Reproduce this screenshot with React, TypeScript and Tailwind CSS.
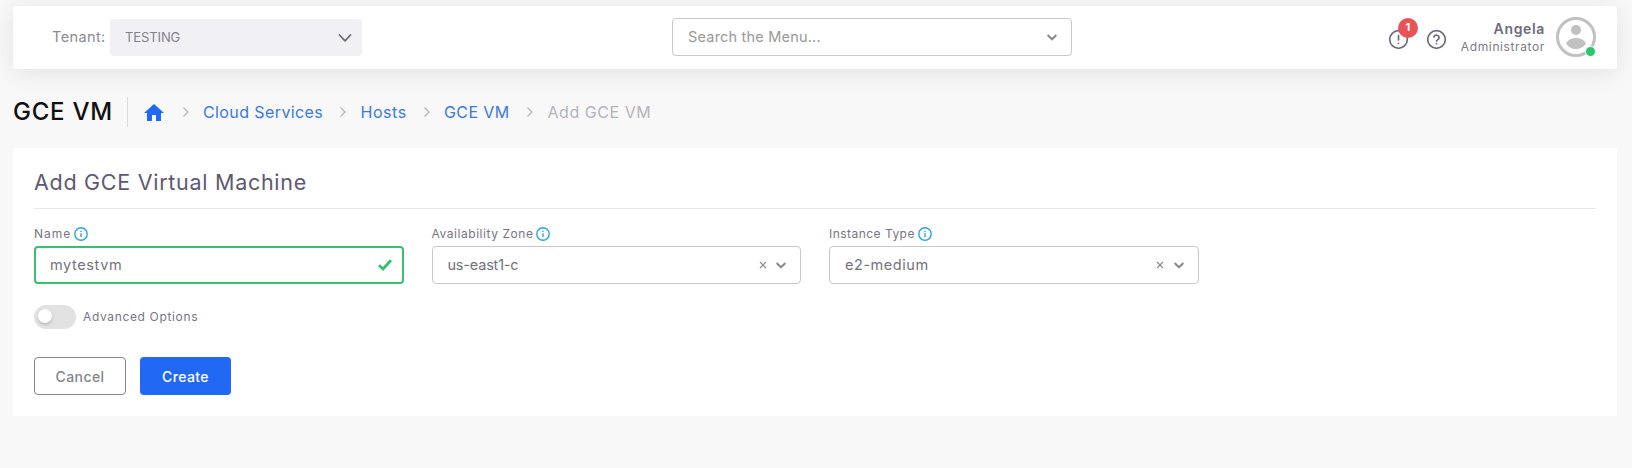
import type { ReactNode } from 'react';

function Chevron({ className = '' }: { className?: string }) {
  return (
    <svg viewBox="0 0 20 20" className={className} fill="currentColor" aria-hidden="true">
      <path d="M4.516 7.548c0.436-0.446 1.043-0.481 1.576 0l3.908 3.747 3.908-3.747c0.533-0.481 1.141-0.446 1.574 0 0.436 0.445 0.408 1.197 0 1.615-0.406 0.418-4.695 4.502-4.695 4.502-0.217 0.223-0.502 0.335-0.787 0.335s-0.57-0.112-0.789-0.335c0 0-4.287-4.084-4.695-4.502s-0.436-1.17 0-1.615z" stroke="currentColor" strokeWidth="0.5" />
    </svg>
  );
}

function Separator() {
  return (
    <svg viewBox="0 0 8 12" className="h-3 w-2 shrink-0" fill="none" stroke="#b8b8bd" strokeWidth="1.4" aria-hidden="true">
      <path d="M1.5 1.5 6 6 1.5 10.5" />
    </svg>
  );
}

function InfoIcon() {
  return (
    <svg viewBox="0 0 14 14" className="size-3.5 shrink-0" fill="none" stroke="#2ba3dc" aria-hidden="true">
      <circle cx="7" cy="7" r="6.2" strokeWidth="1.4" />
      <path d="M7 6.2V10M7 3.8V5" strokeWidth="1.4" />
    </svg>
  );
}

function Field({ label, className, children }: { label: string; className: string; children: ReactNode }) {
  return (
    <div className="flex w-[369.5px] flex-col">
      <div className="flex h-[14px] items-center gap-[3px] text-[12px] font-[375] whitespace-nowrap text-[#77747f]">
        <span className={className}>{label}</span>
        <InfoIcon />
      </div>
      {children}
    </div>
  );
}

function SelectBox({ value, className }: { value: string; className: string }) {
  return (
    <div className="mt-[5px] flex h-[38px] items-center rounded-[4px] border border-[#c8c8c8] pr-[11px] pl-[15px] text-[14.5px] font-[375] text-[#74717c]">
      <span className={className}>{value}</span>
      <svg viewBox="0 0 8 8" className="mr-[6.5px] ml-auto size-2" stroke="#8c8c8c" strokeWidth="1.2" aria-hidden="true">
        <path d="M1 1 7 7M7 1 1 7" />
      </svg>
      <Chevron className="size-4 text-[#888888]" />
    </div>
  );
}

export default function App() {
  return (
    <div className="h-[468px] w-full overflow-hidden bg-[#f8f8f8] pt-1.5 pr-[15px] pl-[13px] font-['Inter',sans-serif]">
      <header className="flex h-[63px] items-center rounded-[3px] bg-white pr-[21px] pl-[39px] shadow-[0_4px_24px_0_rgba(34,41,47,0.1)]">
        <span className="-mt-px w-[58px] text-[14.5px] font-[375] tracking-[0.4px] text-[#8c8a94]">Tenant:</span>
        <div className="flex h-[37px] w-[252px] items-center justify-between rounded-[4px] bg-[#f1f0f5] pr-[10px] pl-[15px] text-[13px] text-[#85828c]">
          <span className="tracking-[-0.1px]">TESTING</span>
          <svg viewBox="0 0 14 10" className="h-[10px] w-[14px]" fill="none" stroke="#6e6b7b" strokeWidth="1.8" strokeLinecap="round" strokeLinejoin="round" aria-hidden="true">
            <path d="M1.5 2 7 7.8 12.5 2" />
          </svg>
        </div>
        <div className="-mt-px ml-[310px] flex h-[38px] w-[400px] items-center justify-between rounded-[4px] border border-[#c8c8c8] pr-[11px] pl-[15px] text-[14.5px] font-[375] text-[#999999]">
          <span className="tracking-[0.2px]">Search the Menu...</span>
          <Chevron className="size-4 text-[#888888]" />
        </div>
        <div className="-mt-px ml-auto flex items-center">
          <div className="relative mt-1 mr-[17px]">
            <svg viewBox="0 0 21 21" className="size-[21px]" fill="none" stroke="#6e6b7b" strokeWidth="1.7" strokeLinecap="round" aria-hidden="true">
              <circle cx="10.5" cy="10.5" r="8.8" />
              <path d="M10.5 6.7v4.2M10.5 14.3v.1" />
            </svg>
            <span className="absolute -top-[11px] left-[10px] flex size-5 items-center justify-center rounded-full bg-[#e85355] text-[11px] font-bold text-white">1</span>
          </div>
          <svg viewBox="0 0 21 21" className="mt-1 mr-[14px] size-[21px]" fill="none" stroke="#6e6b7b" strokeWidth="1.7" strokeLinecap="round" strokeLinejoin="round" aria-hidden="true">
            <circle cx="10.5" cy="10.5" r="8.8" />
            <path d="M7.9 7.9a2.7 2.7 0 0 1 5.2.9c0 1.8-2.6 2.2-2.6 3.2M10.5 14.6v.1" />
          </svg>
          <div className="mt-px flex flex-col items-end text-[#6e6b7b]">
            <span className="text-[14px] leading-[18px] font-semibold tracking-[0.65px]">Angela</span>
            <span className="text-[12px] leading-[17px] font-[375] tracking-[0.62px] text-[#7c7985]">Administrator</span>
          </div>
          <div className="relative ml-[11px] size-10">
            <svg viewBox="0 0 40 40" className="size-10" aria-hidden="true">
              <circle cx="20" cy="20" r="18.5" fill="#fff" stroke="#c1c1c1" strokeWidth="3" />
              <circle cx="20" cy="13" r="5" fill="#c1c1c1" />
              <path d="M10 26.400c2-3.500 5.800-5.300 10-5.300s8 1.800 10 5.300c-2 3.400-5.800 5.500-10 5.500s-8-2.100-10-5.500z" fill="#c1c1c1" />
            </svg>
            <span className="absolute right-0 bottom-0 size-[11px] rounded-full border border-white bg-[#28c76f]" />
          </div>
        </div>
      </header>

      <nav className="flex h-[79px] items-center pt-[7px] whitespace-nowrap text-[16px] text-[#3c78e0]">
        <h1 className="w-[114px] text-[24px] font-medium tracking-[0.75px] text-[#111111]">GCE VM</h1>
        <span className="h-[30px] w-px bg-[#d6dce1]" />
        <svg viewBox="0 0 20 17" className="ml-4 h-[17px] w-5" fill="#2168f5" aria-hidden="true">
          <path d="M8 17v-6h4v6h5V9h3L10 0 0 9h3v8z" />
        </svg>
        <span className="ml-[18px] flex"><Separator /></span>
        <span className="ml-[13px] w-[136px] tracking-[0.4px]">Cloud Services</span>
        <Separator />
        <span className="ml-[13.5px] w-[62.5px] tracking-[0.55px]">Hosts</span>
        <Separator />
        <span className="ml-[13px] w-[82px] tracking-[0.4px]">GCE VM</span>
        <Separator />
        <span className="ml-[13.5px] tracking-[0.55px] text-[#b4b4ba]">Add GCE VM</span>
      </nav>

      <main className="h-[268px] w-full bg-white px-[21px]">
        <h2 className="flex h-[61px] items-center border-b border-[#e6e6e6] pt-[8px] text-[21.5px] tracking-[0.72px] text-[#5e5873]">
          Add GCE Virtual Machine
        </h2>
        <div className="mt-[18px] flex gap-7">
          <Field label="Name" className="tracking-[1px]">
            <div className="mt-[5px] flex h-[38px] items-center justify-between rounded-[4px] border-2 border-[#3dbd74] pr-[10px] pl-[14px] text-[14.5px] font-[375] text-[#74717c]">
              <span className="tracking-[0.6px]">mytestvm</span>
              <svg viewBox="0 0 14 12" className="h-3 w-[14px]" fill="none" stroke="#36bf70" strokeWidth="2.8" aria-hidden="true">
                <path d="M1 6.300 5 10 13 1.300" />
              </svg>
            </div>
          </Field>
          <Field label="Availability Zone" className="tracking-[0.55px]">
            <SelectBox value="us-east1-c" className="tracking-[-0.2px]" />
          </Field>
          <Field label="Instance Type" className="tracking-[0.47px]">
            <SelectBox value="e2-medium" className="tracking-[0.55px]" />
          </Field>
        </div>
        <div className="mt-[21px] flex h-6 items-center">
          <div className="flex h-6 w-[42px] rounded-full bg-[#e2e2e2] p-1">
            <span className="size-[14px] rounded-full bg-white shadow-[0_2px_3px_rgba(0,0,0,0.18)]" />
          </div>
          <span className="ml-[7px] text-[12px] font-[375] tracking-[0.65px] text-[#77747f]">Advanced Options</span>
        </div>
        <div className="mt-7 flex gap-[14px] text-[14px] font-medium tracking-[0.4px]">
          <button className="h-[38px] w-[92px] rounded-[4px] border border-[#82868b] text-[#82868b]">Cancel</button>
          <button className="h-[38px] w-[91px] rounded-[4px] bg-[#2168f5] text-white">Create</button>
        </div>
      </main>
    </div>
  );
}
